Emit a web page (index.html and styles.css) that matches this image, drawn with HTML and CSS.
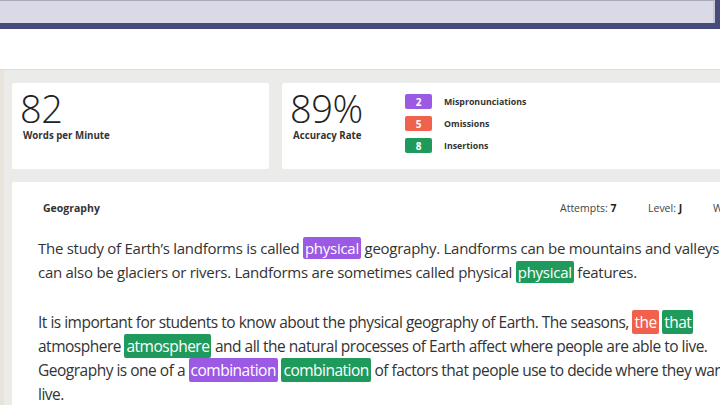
FILE: index.html
```html
<!DOCTYPE html>
<html lang="en">
<head>
<meta charset="utf-8">
<title>Reading Progress</title>
<link rel="stylesheet" href="styles.css">
</head>
<body>
<div class="topbar"><div class="search"></div></div>
<div class="whitebar"></div>
<main class="main">
  <section class="stats">
    <div class="card card-wpm">
      <div class="stat">
        <div class="stat-num">82</div>
        <div class="stat-label">Words per Minute</div>
      </div>
    </div>
    <div class="card card-acc">
      <div class="stat stat-acc">
        <div class="stat-num">89%</div>
        <div class="stat-label">Accuracy Rate</div>
      </div>
      <ul class="legend">
        <li class="legend-row"><span class="badge purple">2</span><span class="legend-label">Mispronunciations</span></li>
        <li class="legend-row"><span class="badge red">5</span><span class="legend-label">Omissions</span></li>
        <li class="legend-row"><span class="badge green">8</span><span class="legend-label">Insertions</span></li>
      </ul>
    </div>
  </section>
  <section class="card passage">
    <header class="passage-head">
      <span class="passage-title">Geography</span>
      <span class="meta meta-attempts">Attempts: <b>7</b></span>
      <span class="meta meta-level">Level: <b>J</b></span>
      <span class="meta meta-words">Words: <b>112</b></span>
    </header>
    <p class="para para-1">The study of Earth’s landforms is called <span class="hl purple">physical</span> geography. Landforms can be mountains and valleys. Landforms<br>can also be glaciers or rivers. Landforms are sometimes called physical <span class="hl green">physical</span> features.</p>
    <p class="para para-2">It is important for students to know about the physical geography of Earth. The seasons, <span class="hl red">the</span> <span class="hl green">that</span><br>atmosphere <span class="hl green">atmosphere</span> and all the natural processes of Earth affect where people are able to live.<br>Geography is one of a <span class="hl purple">combination</span> <span class="hl green">combination</span> of factors that people use to decide where they want to<br>live.</p>
  </section>
</main>
</body>
</html>
```

FILE: styles.css
```css
* { box-sizing: border-box; }
html, body { margin: 0; padding: 0; }
body {
  width: 720px;
  height: 405px;
  overflow: hidden;
  background: #ebebe9;
  font-family: "Open Sans", "Noto Sans", sans-serif;
  color: #333;
}
.topbar {
  background: #474b7b;
  padding: 0 5px 6px 0;
}
.search {
  height: 23px;
  background: #d9dae6;
  border-top: 1px solid #a9aabb;
  border-right: 2px solid #c5c6d6;
}
.whitebar {
  height: 41px;
  background: #fff;
  border-bottom: 1px solid #dcdcdc;
}
.main {
  width: 900px;
  border-left: 4px solid #e8e4dc;
  padding: 13px 0 0 8px;
}
.stats {
  display: flex;
  gap: 13px;
}
.card {
  background: #fff;
  border-radius: 2px;
}
.card-wpm {
  width: 257px;
  height: 86px;
  padding: 6px 8px 0;
}
.card-acc {
  flex: 1;
  height: 86px;
  padding: 6px 8px 0;
  display: flex;
}
.stat-num {
  font-size: 38px;
  font-weight: 300;
  line-height: 38px;
  color: #222;
  letter-spacing: -0.5px;
}
.stat-label {
  margin-top: 3px;
  font-size: 9.7px;
  line-height: 12px;
  font-weight: 700;
  margin-left: 3px;
  color: #333;
}
.stat-acc { width: 115px; }
.legend {
  list-style: none;
  margin: 5px 0 0;
  padding: 0;
  display: flex;
  flex-direction: column;
  gap: 7px;
}
.legend-row {
  display: flex;
  align-items: center;
  gap: 12px;
  height: 15px;
}
.badge {
  width: 27px;
  height: 15px;
  border-radius: 2px;
  color: #fff;
  font-size: 10px;
  font-weight: 700;
  display: flex;
  align-items: center;
  justify-content: center;
}
.purple { background: #9c59e3; }
.red { background: #f0614e; }
.green { background: #1f9a5d; }
.legend-label {
  font-size: 8.8px;
  font-weight: 700;
  color: #333;
}
.passage {
  margin-top: 13px;
  height: 240px;
  padding: 17px 26px 0;
}
.passage-head {
  display: flex;
  align-items: center;
  height: 18px;
  font-size: 10.5px;
  padding-left: 5px;
}
.passage-title {
  font-weight: 700;
  width: 517px;
}
.meta { color: #444; }
.meta b { color: #222; }
.meta-attempts { width: 88px; }
.meta-level { width: 65px; }
.para {
  margin: 0;
  line-height: 24px;
  white-space: nowrap;
  color: #333;
}
.para-1 {
  margin-top: 19px;
  font-size: 15px;
  letter-spacing: -0.27px;
}
.para-2 {
  margin-top: 26px;
  font-size: 15.5px;
  letter-spacing: -0.5px;
}
.hl {
  color: #fff;
  border-radius: 2px;
  padding: 1px 2px;
}
```
